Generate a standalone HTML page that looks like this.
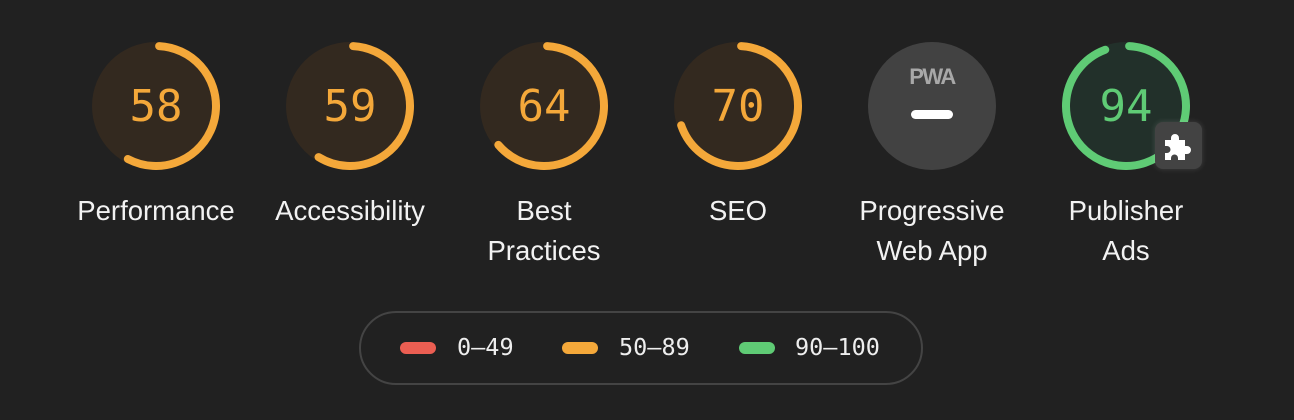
<!DOCTYPE html>
<html><head><meta charset="utf-8"><style>
html,body{margin:0;padding:0;background:#212121;width:1294px;height:420px;overflow:hidden;font-family:"Liberation Sans",sans-serif}
.g{position:absolute;top:42px;width:128px;height:128px}
.g svg{position:absolute;left:0;top:0}
.num{position:absolute;left:0;top:1px;width:128px;line-height:128px;text-align:center;font-family:"DejaVu Sans Mono","Liberation Mono",monospace;font-size:44px}
.lab{position:absolute;top:191px;width:194px;text-align:center;color:#f2f2f2;font-size:27.5px;line-height:40px}
.leg{position:absolute;left:359px;top:311px;width:560px;height:70px;border:2px solid #444;border-radius:37px}
.pill{position:absolute;top:342px;width:36px;height:12px;border-radius:6px}
.lt{position:absolute;top:333px;font-family:"DejaVu Sans Mono","Liberation Mono",monospace;font-size:23.5px;color:#eee;line-height:28px}
</style></head><body>

<div class="g" style="left:92px"><svg width="128" height="128"><circle cx="64" cy="64" r="64" fill="#33291f"/><circle cx="64" cy="64" r="60" fill="none" stroke="#f4a83a" stroke-width="8" stroke-linecap="round" stroke-dasharray="214.6 400" transform="rotate(-87 64 64)"/></svg><div class="num" style="color:#f4a83a">58</div></div>
<div class="g" style="left:286px"><svg width="128" height="128"><circle cx="64" cy="64" r="64" fill="#33291f"/><circle cx="64" cy="64" r="60" fill="none" stroke="#f4a83a" stroke-width="8" stroke-linecap="round" stroke-dasharray="218.4 400" transform="rotate(-87 64 64)"/></svg><div class="num" style="color:#f4a83a">59</div></div>
<div class="g" style="left:480px"><svg width="128" height="128"><circle cx="64" cy="64" r="64" fill="#33291f"/><circle cx="64" cy="64" r="60" fill="none" stroke="#f4a83a" stroke-width="8" stroke-linecap="round" stroke-dasharray="237.2 400" transform="rotate(-87 64 64)"/></svg><div class="num" style="color:#f4a83a">64</div></div>
<div class="g" style="left:674px"><svg width="128" height="128"><circle cx="64" cy="64" r="64" fill="#33291f"/><circle cx="64" cy="64" r="60" fill="none" stroke="#f4a83a" stroke-width="8" stroke-linecap="round" stroke-dasharray="259.9 400" transform="rotate(-87 64 64)"/></svg><div class="num" style="color:#f4a83a">70</div></div>
<div class="g" style="left:868px"><svg width="128" height="128"><circle cx="64" cy="64" r="64" fill="#424242"/><rect x="43" y="68" width="42" height="9" rx="4.5" fill="#fff"/></svg><div style="position:absolute;left:0;top:22px;width:128px;text-align:center;color:#a8a8a8;font-weight:bold;font-size:22px;letter-spacing:-1.5px">PWA</div></div>
<div class="g" style="left:1062px"><svg width="128" height="128"><circle cx="64" cy="64" r="64" fill="#22302a"/><circle cx="64" cy="64" r="60" fill="none" stroke="#5fcb75" stroke-width="8" stroke-linecap="round" stroke-dasharray="352.5 400" transform="rotate(-87 64 64)"/></svg><div class="num" style="color:#5fcb75">94</div></div>
<div style="position:absolute;left:1155px;top:122px;width:47px;height:47px;border-radius:8px;background:#434343;box-shadow:0 0 6px rgba(255,255,255,.15)">
<svg width="47" height="47" viewBox="0 0 47 47"><path fill="#fff" d="M10 18h6v-2a4 4 0 0 1 8 0v2h6v6h2a4 4 0 0 1 0 8h-2v6h-7v-2a3.5 3.5 0 0 0-7 0v2h-6v-7h2a3.5 3.5 0 0 0 0-7h-2z"/></svg></div>

<div class="lab" style="left:59px">Performance</div>
<div class="lab" style="left:253px">Accessibility</div>
<div class="lab" style="left:447px">Best<br>Practices</div>
<div class="lab" style="left:641px">SEO</div>
<div class="lab" style="left:835px">Progressive<br>Web App</div>
<div class="lab" style="left:1029px">Publisher<br>Ads</div>

<div class="leg"></div>
<div class="pill" style="left:400px;background:#eb5e52"></div><div class="lt" style="left:457px">0–49</div>
<div class="pill" style="left:562px;background:#f4a83a"></div><div class="lt" style="left:619px">50–89</div>
<div class="pill" style="left:739px;background:#5fcb75"></div><div class="lt" style="left:795px">90–100</div>
</body></html>
